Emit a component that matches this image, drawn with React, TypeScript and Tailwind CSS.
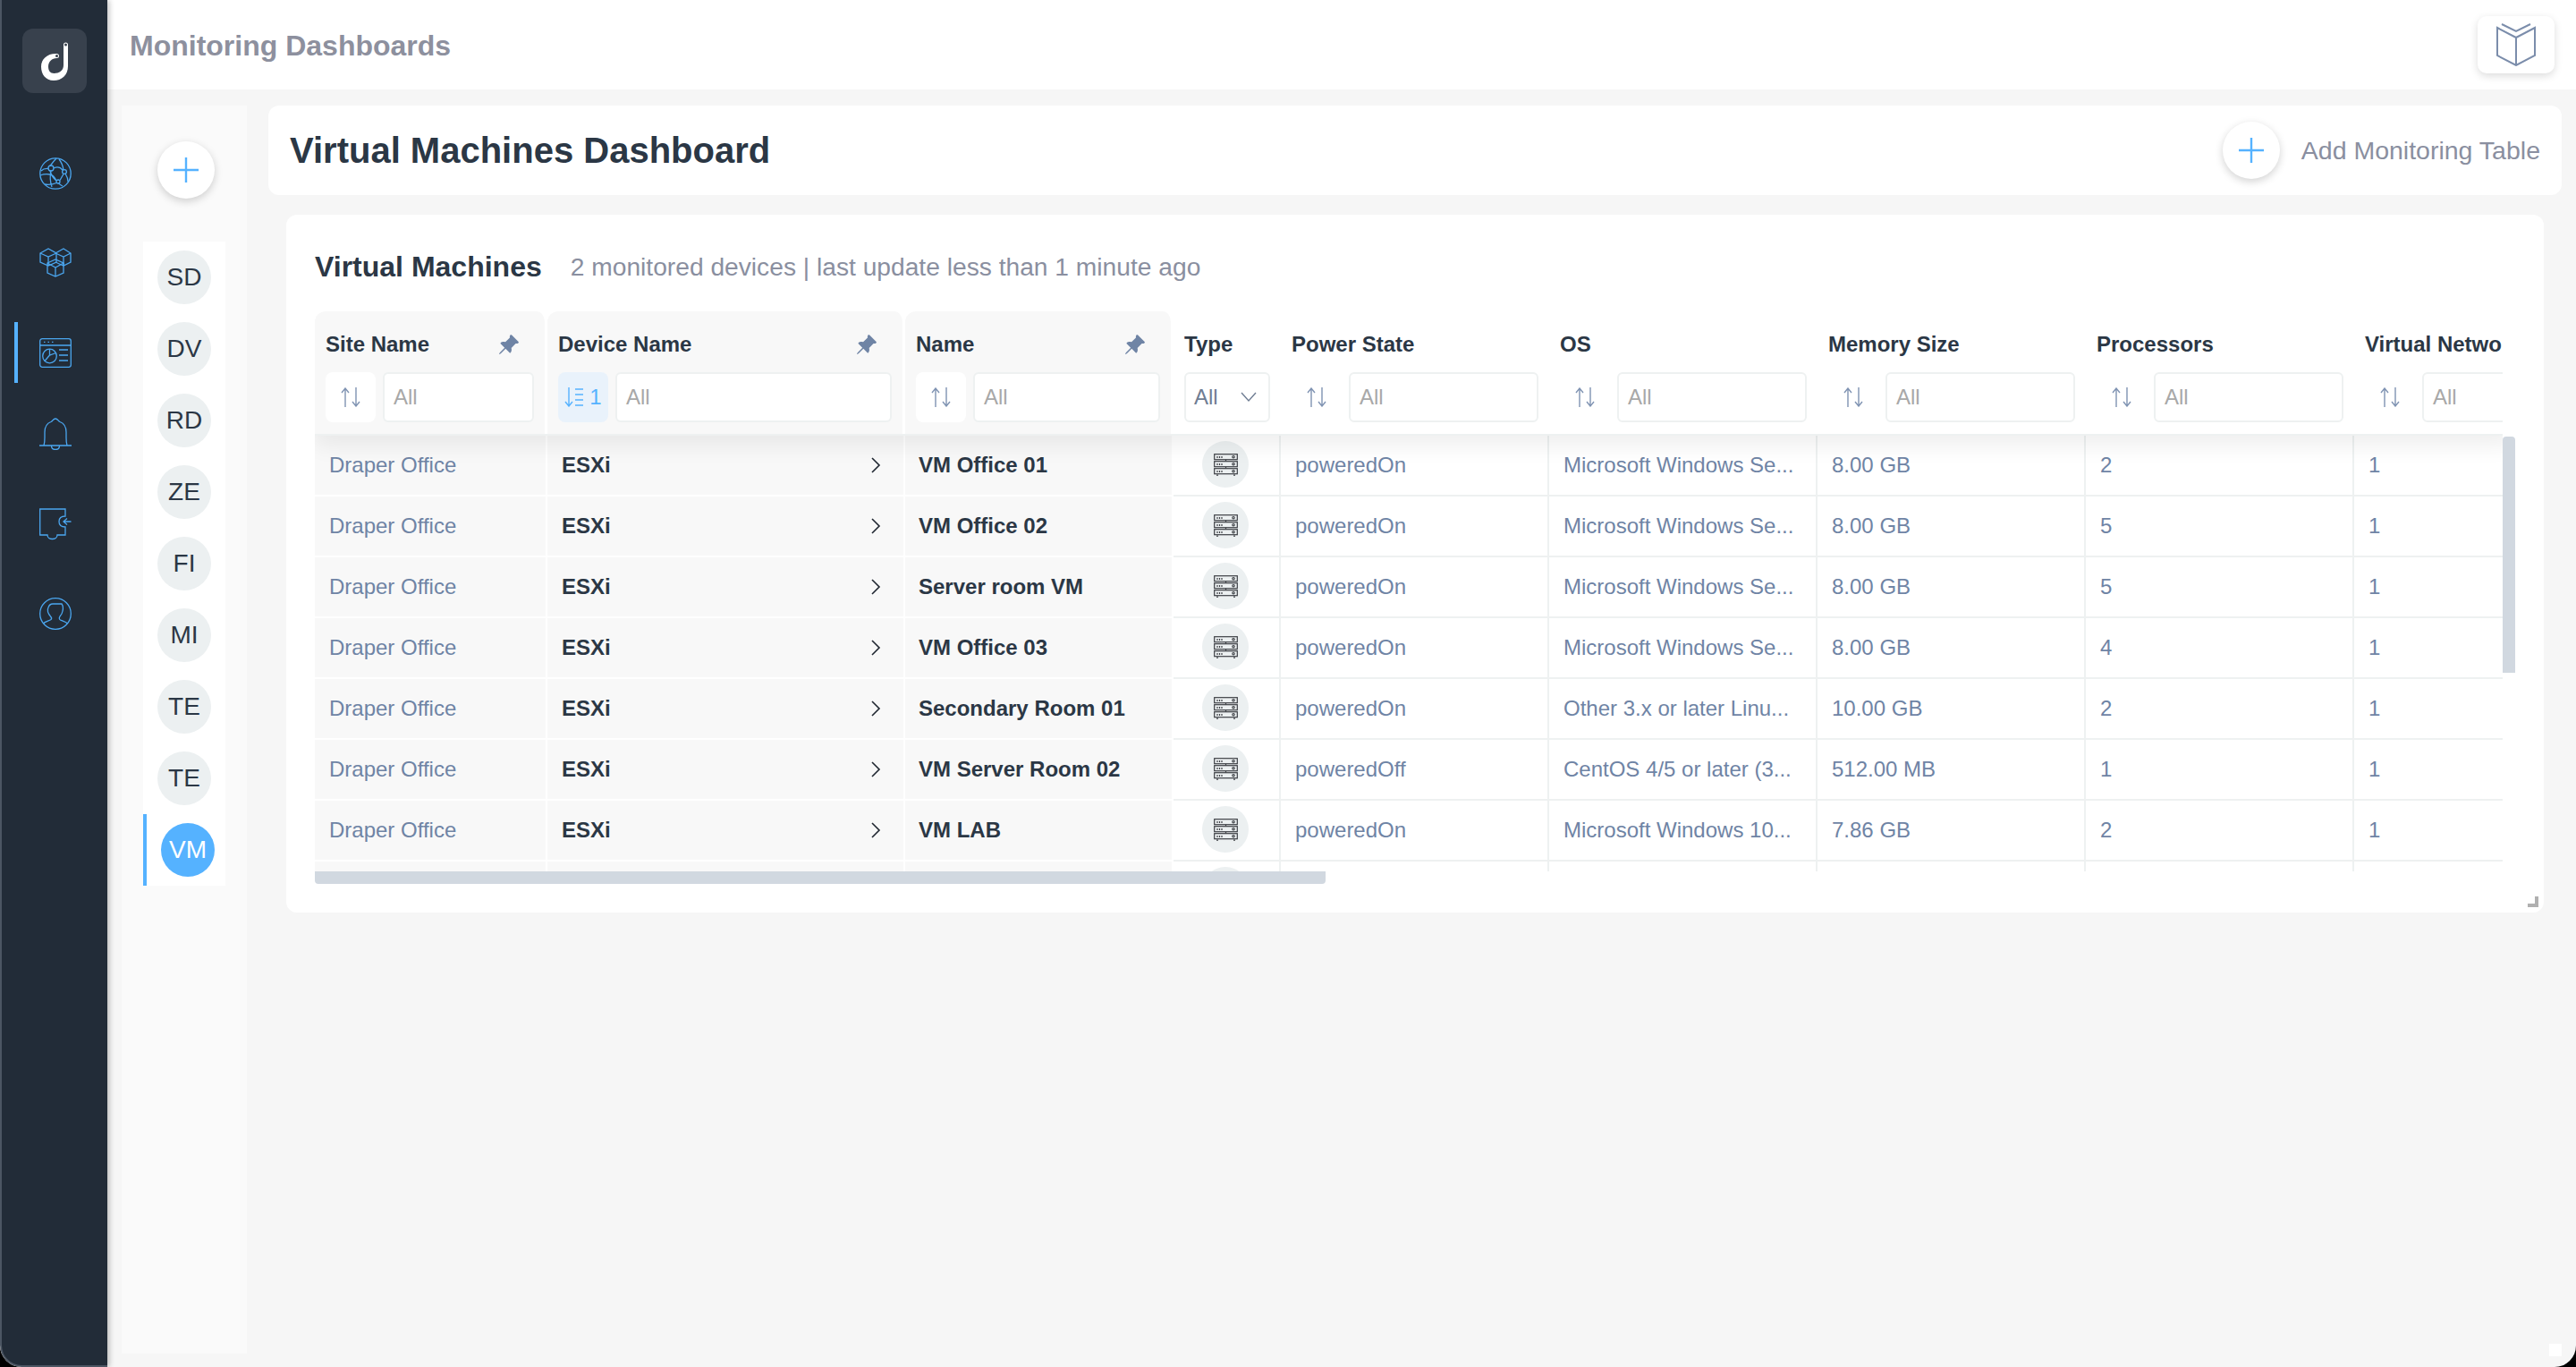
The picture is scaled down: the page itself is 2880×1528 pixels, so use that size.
import { BsPinAngleFill } from "react-icons/bs";

const iconClass = "w-[36px] h-[36px] fill-none stroke-[#4ba6ef] stroke-[1.3]";

const GlobeIcon = () => (
  <svg viewBox="0 0 36 36" className={iconClass}>
    <circle cx="18" cy="18" r="17.2" />
    <circle cx="13" cy="12" r="3" />
    <circle cx="28" cy="16" r="2.4" />
    <circle cx="21" cy="27" r="2" />
    <path d="M16 12 Q22 9 26 14 M27 18.5 L23 25.5 M19 26 Q14 22 12 15 M10 12.5 Q5 12 2 15 M1 20 Q6 18 12 19 Q16 20 19 26 M12 9.5 Q16 4 19 1 M27 14 Q26 7 22 2 M29 18 Q32 23 32 27 M21.5 29 Q24 31 26 32 M6 30 Q13 31 19 28.5 M13 15 Q11 24 14 33" />
  </svg>
);

const CubesIcon = () => (
  <svg viewBox="0 0 36 36" className={iconClass}>
    <path d="M1 8 L10 3 L19 8 L19 18 L10 22 L1 18 Z M1 8 L10 12 L19 8 M10 12 V22" />
    <path d="M18 8 L27 3 L35 8 V18 L27 22 L18 18 M18 8 L27 12 L35 8 M27 12 V22" />
    <path d="M9 19 L18 15 L27 19 V30 L18 34 L9 30 Z M9 19 L18 24 L27 19 M18 24 V34" />
  </svg>
);

const DashboardIcon = () => (
  <svg viewBox="0 0 36 33" className="w-[36px] h-[33px] fill-none stroke-[#4ba6ef] stroke-[1.3]">
    <rect x="0.7" y="0.7" width="34.6" height="31.6" rx="2.5" />
    <path d="M1 8 H35 M5 4.3 H6.5 M9.5 4.3 H11 M14 4.3 H15.5" />
    <circle cx="11.5" cy="20" r="7.8" />
    <path d="M11.5 12.2 V19 L18.5 16.5 M11.5 19 L6 25.5" />
    <path d="M22 13 H32 M22 19 H32 M22 25 H32" />
  </svg>
);

const BellIcon = () => (
  <svg viewBox="0 0 36 36" className={iconClass}>
    <path d="M0 31 H36 M5 31 Q6 28 6 22 V16 C6 10 9 6 13 4.5 C15 3.5 15.5 1 18 1 C20.5 1 21 3.5 23 4.5 C27 6 30 10 30 16 V22 Q30 28 31 31" />
    <path d="M13.5 31 C13.5 37 22.5 37 22.5 31" />
  </svg>
);

const PuzzleIcon = () => (
  <svg viewBox="0 0 36 36" className={iconClass}>
    <path d="M0.7 1 H29 V9 C24 9 22 12 22 15 C22 18 24 21 29 21 V30 H20 C20 36 9 36 9 30 H0.7 Z" />
    <path d="M35.5 15 H27 M31 11.5 L27 15 L31 18.5" />
  </svg>
);

const UserIcon = () => (
  <svg viewBox="0 0 36 36" className={iconClass}>
    <circle cx="18" cy="18" r="17.3" />
    <path d="M4.5 29 C6 27 11 26 13 24.5 C14 23.5 13.5 22 12.5 21 C10 18 8.5 14 10 11 C11 8 13 7 15 7 H25 C26.5 9 26.5 13 26 15 C25.5 18 24 20 23 21 C22 22.5 22 24 23.5 25 C25.5 26 29.5 27 31.5 29" />
  </svg>
);

const Logo = () => (
  <svg viewBox="0 0 72 72" className="w-[72px] h-[72px]">
    <path
      d="M46 18 a2.5 2.5 0 0 1 5 0 V42 C51 52 44 58 35 58 C26 58 21 51 21 42.5 C21 34 28 27.5 38.5 28 a2.5 2.5 0 0 1 0 5 C33 33 29 37 29 42.5 C29 47 31 50 35.5 50 C41 50 46 47 46 41 Z"
      fill="#ffffff"
    />
    <circle cx="48.5" cy="18" r="1.5" fill="#38414d" />
    <circle cx="38.5" cy="30.5" r="1.5" fill="#38414d" />
  </svg>
);

const PlusIcon = () => (
  <svg viewBox="0 0 28 28" className="w-[28px] h-[28px] fill-none stroke-[#55b2ff] stroke-[2.4]">
    <path d="M14 0 V28 M0 14 H28" />
  </svg>
);

const BookIcon = () => (
  <svg viewBox="0 0 44 48" className="w-[44px] h-[48px] fill-none stroke-[#7b8dab] stroke-[2]">
    <path d="M1 5 L22 16 L43 5 V36 L22 47 L1 36 Z M22 16 V47 M6 1 L22 9 L38 1" />
  </svg>
);

const SortIcon = () => (
  <svg viewBox="0 0 22 22" className="w-[22px] h-[22px] fill-none stroke-[#7f93b2] stroke-[1.4]">
    <path d="M5 22 V1 M1 6 L5 1 L9 6 M17 0 V21 M13 16 L17 21 L21 16" />
  </svg>
);

const SortActiveIcon = () => (
  <svg viewBox="0 0 22 22" className="w-[22px] h-[22px] fill-none stroke-[#55b2ff] stroke-[1.4]">
    <path d="M5 0 V21 M1 16 L5 21 L9 16 M12 2 H21 M12 8 H21 M12 14 H21 M12 20 H21" />
  </svg>
);

const ChevronRight = () => (
  <svg viewBox="0 0 12 18" className="w-[12px] h-[18px] fill-none stroke-[#1f2630] stroke-[1.6]">
    <path d="M2 1 L10 9 L2 17" />
  </svg>
);

const ChevronDown = () => (
  <svg viewBox="0 0 18 12" className="w-[18px] h-[12px] fill-none stroke-[#6f7d93] stroke-[1.4]">
    <path d="M1 1 L9 10 L17 1" />
  </svg>
);

const ServerIcon = () => (
  <svg viewBox="0 0 27 25" className="w-[27px] h-[25px] fill-none stroke-[#3c3f44] stroke-[1.2]">
    <rect x="0.7" y="0.7" width="25.6" height="6" />
    <rect x="0.7" y="8.7" width="25.6" height="6" />
    <rect x="0.7" y="16.7" width="25.6" height="6" />
    <path d="M4 3 V5 M6.5 3 V5 M9 3 V5 M4 11 V13 M6.5 11 V13 M9 11 V13 M4 19 V21 M6.5 19 V21 M9 19 V21 M13.5 7 V8.5 M13.5 15 V16.5 M3 24.2 H5 M22 24.2 H24" />
    <circle cx="22" cy="3.7" r="1.2" />
    <circle cx="22" cy="11.7" r="1.2" />
    <circle cx="22" cy="19.7" r="1.2" />
  </svg>
);

const sites = ["SD", "DV", "RD", "ZE", "FI", "MI", "TE", "TE"];

const rows = [
  { name: "VM Office 01", power: "poweredOn", os: "Microsoft Windows Se...", mem: "8.00 GB", cpu: "2", net: "1" },
  { name: "VM Office 02", power: "poweredOn", os: "Microsoft Windows Se...", mem: "8.00 GB", cpu: "5", net: "1" },
  { name: "Server room VM", power: "poweredOn", os: "Microsoft Windows Se...", mem: "8.00 GB", cpu: "5", net: "1" },
  { name: "VM Office 03", power: "poweredOn", os: "Microsoft Windows Se...", mem: "8.00 GB", cpu: "4", net: "1" },
  { name: "Secondary Room 01", power: "poweredOn", os: "Other 3.x or later Linu...", mem: "10.00 GB", cpu: "2", net: "1" },
  { name: "VM Server Room 02", power: "poweredOff", os: "CentOS 4/5 or later (3...", mem: "512.00 MB", cpu: "1", net: "1" },
  { name: "VM LAB", power: "poweredOn", os: "Microsoft Windows 10...", mem: "7.86 GB", cpu: "2", net: "1" },
  { name: "", power: "", os: "", mem: "", cpu: "", net: "" },
];

const PinnedHead = ({ label, width, active }: { label: string; width: string; active?: boolean }) => (
  <div className={`${width} shrink-0 border-r-[3px] border-white bg-[#f8f8f8] rounded-t-[12px] pb-[13px] pl-[12px] pr-[12px] pt-[23px]`}>
    <div className="flex h-[28px] items-center justify-between pr-[16px]">
      <span className="text-[24px] font-bold text-[#2b3745]">{label}</span>
      <BsPinAngleFill className="w-[25px] h-[25px] text-[#6f84a5]" />
    </div>
    <Filter active={active} />
  </div>
);

const PlainHead = ({ label }: { label: string }) => (
  <div className="w-[300px] shrink-0 pb-[13px] pl-[12px] pr-[12px] pt-[23px]">
    <div className="flex h-[28px] items-center">
      <span className="text-[24px] font-bold text-[#2b3745] whitespace-nowrap">{label}</span>
    </div>
    <Filter />
  </div>
);

const Filter = ({ active }: { active?: boolean }) => (
  <div className="mt-[17px] flex gap-[8px]">
    <div className={`flex h-[56px] w-[56px] shrink-0 items-center justify-center gap-[6px] rounded-[8px] ${active ? "bg-[#e9f2fb]" : "bg-white"}`}>
      {active ? <SortActiveIcon /> : <SortIcon />}
      {active && <span className="text-[24px] text-[#55b2ff]">1</span>}
    </div>
    <div className="flex h-[56px] min-w-0 flex-1 items-center rounded-[6px] border-[2px] border-[#eef1f1] bg-white pl-[10px]">
      <span className="text-[24px] text-[#a8a8a8]">All</span>
    </div>
  </div>
);

const BodyCell = ({ children }: { children?: React.ReactNode }) => (
  <div className="flex h-[68px] w-[300px] shrink-0 items-center border-b-[2px] border-r-[2px] border-[#eef1f1] bg-white pl-[16px] text-[24px] text-[#6f84a5] whitespace-nowrap">
    {children}
  </div>
);

const App = () => {
  return (
    <div className="h-[1528px] w-[2880px] overflow-hidden bg-black font-['Liberation_Sans',sans-serif]">
      <div className="relative flex h-full w-full overflow-hidden rounded-b-[24px] bg-[#f6f6f6]">
        <aside className="relative z-20 flex h-full w-[120px] shrink-0 flex-col items-center rounded-bl-[24px] border-b-[2px] border-l-[2px] border-[#4c5663] bg-[#222c38] shadow-[2px_0_6px_rgba(0,0,0,0.25)]">
          <div className="mt-[32px] h-[72px] w-[72px] rounded-[12px] bg-[#38414d]">
            <Logo />
          </div>
          <div className="mt-[72px] flex flex-col items-center pl-[2px]">
            <GlobeIcon />
            <div className="mt-[63px]">
              <CubesIcon />
            </div>
            <div className="relative mt-[65px] flex h-[36px] items-center">
              <div className="absolute left-[-28px] top-[-16px] h-[68px] w-[4px] bg-[#55b2ff]" />
              <DashboardIcon />
            </div>
            <div className="mt-[55px]">
              <BellIcon />
            </div>
            <div className="mt-[65px]">
              <PuzzleIcon />
            </div>
            <div className="mt-[64px]">
              <UserIcon />
            </div>
          </div>
        </aside>

        <main className="flex min-w-0 flex-1 flex-col">
          <header className="flex h-[100px] shrink-0 items-center justify-between bg-white pl-[25px] pr-[24px]">
            <h1 className="pt-[1px] text-[32px] font-bold text-[#8d909e]">Monitoring Dashboards</h1>
            <button className="flex h-[64px] w-[86px] items-center justify-center rounded-[10px] bg-white shadow-[0_3px_10px_rgba(0,0,0,0.14)]">
              <BookIcon />
            </button>
          </header>

          <div className="flex min-h-0 flex-1 pr-[16px] pt-[18px]">
            <div className="ml-[16px] mb-[15px] flex w-[140px] shrink-0 flex-col items-center bg-[#fafafa]">
              <button className="ml-[4px] mt-[40px] flex h-[64px] w-[64px] items-center justify-center rounded-full bg-white shadow-[0_3px_10px_rgba(0,0,0,0.18)]">
                <PlusIcon />
              </button>
              <div className="mt-[48px] w-[92px] bg-white">
                {sites.map((s, i) => (
                  <div key={i} className="flex h-[80px] items-center pl-[16px]">
                    <div className="flex h-[60px] w-[60px] items-center justify-center rounded-full bg-[#ecf0f1] text-[28px] text-[#2b3745]">
                      {s}
                    </div>
                  </div>
                ))}
                <div className="flex h-[80px] items-center border-l-[4px] border-[#55b2ff] pl-[16px]">
                  <div className="flex h-[60px] w-[60px] items-center justify-center rounded-full bg-[#55b2ff] text-[28px] text-white">
                    VM
                  </div>
                </div>
              </div>
            </div>

            <div className="ml-[24px] flex min-w-0 flex-1 flex-col">
              <div className="flex h-[100px] items-center justify-between rounded-[12px] bg-white pl-[24px] pr-[24px]">
                <h2 className="text-[40px] font-bold text-[#2b3745]">Virtual Machines Dashboard</h2>
                <div className="flex items-center gap-[24px]">
                  <button className="flex h-[64px] w-[64px] items-center justify-center rounded-full bg-white shadow-[0_3px_10px_rgba(0,0,0,0.18)]">
                    <PlusIcon />
                  </button>
                  <span className="text-[28.5px] text-[#8a8fa0]">Add Monitoring Table</span>
                </div>
              </div>

              <section className="relative ml-[20px] mr-[20px] mt-[22px] h-[780px] rounded-[12px] bg-white pl-[32px] pt-[40px]">
                <div className="flex h-[36px] items-center gap-[32px]">
                  <h3 className="text-[32px] font-bold text-[#2b3745]">Virtual Machines</h3>
                  <span className="text-[28.2px] text-[#8a8fa0]">2 monitored devices | last update less than 1 minute ago</span>
                </div>

                <div className="mt-[32px] flex">
                  <div className="h-[626px] w-[2446px] overflow-hidden">
                    <div className="relative z-10 flex w-[2460px] border-b-[2px] border-[#eef1f1] bg-white shadow-[0_10px_24px_rgba(0,0,0,0.07)]">
                      <PinnedHead label="Site Name" width="w-[260px]" />
                      <PinnedHead label="Device Name" width="w-[400px]" active />
                      <PinnedHead label="Name" width="w-[300px]" />
                      <div className="w-[120px] shrink-0 pl-[12px] pr-[12px] pt-[23px]">
                        <div className="flex h-[28px] items-center">
                          <span className="text-[24px] font-bold text-[#2b3745]">Type</span>
                        </div>
                        <div className="mt-[17px] flex h-[56px] w-[96px] items-center justify-between rounded-[6px] border-[2px] border-[#eef1f1] pl-[9px] pr-[13px]">
                          <span className="text-[24px] text-[#6f7d93]">All</span>
                          <ChevronDown />
                        </div>
                      </div>
                      <PlainHead label="Power State" />
                      <PlainHead label="OS" />
                      <PlainHead label="Memory Size" />
                      <PlainHead label="Processors" />
                      <PlainHead label="Virtual Network" />
                    </div>

                    {rows.map((r, i) => (
                      <div key={i} className="flex w-[2460px]">
                        <div className="flex h-[68px] w-[260px] shrink-0 items-center border-b-[2px] border-r-[2px] border-white bg-[#f8f8f8] pl-[16px] text-[24px] text-[#6f84a5]">
                          {r.name && "Draper Office"}
                        </div>
                        <div className="flex h-[68px] w-[400px] shrink-0 items-center justify-between border-b-[2px] border-r-[2px] border-white bg-[#f8f8f8] pl-[16px] pr-[25px] text-[24px] font-bold text-[#2b3745]">
                          {r.name && "ESXi"}
                          {r.name && <ChevronRight />}
                        </div>
                        <div className="flex h-[68px] w-[300px] shrink-0 items-center border-b-[2px] border-r-[2px] border-white bg-[#f8f8f8] pl-[15px] text-[24px] font-bold text-[#2b3745]">
                          {r.name}
                        </div>
                        <div className="flex h-[68px] w-[120px] shrink-0 items-center justify-center border-b-[2px] border-r-[2px] border-[#eef1f1] bg-white pb-[2px] pr-[2px]">
                          <div className="flex h-[52px] w-[52px] items-center justify-center rounded-full bg-[#ecf0f1]">
                            <ServerIcon />
                          </div>
                        </div>
                        <BodyCell>{r.power}</BodyCell>
                        <BodyCell>{r.os}</BodyCell>
                        <BodyCell>{r.mem}</BodyCell>
                        <BodyCell>{r.cpu}</BodyCell>
                        <BodyCell>{r.net}</BodyCell>
                      </div>
                    ))}
                  </div>
                  <div className="mt-[140px] h-[264px] w-[14px] rounded-t-[4px] bg-[#d1d8e0]" />
                </div>
                <div className="h-[14px] w-[1130px] rounded-b-[4px] bg-[#d1d8e0]" />

                <div className="absolute bottom-[6px] right-[6px] h-[12px] w-[12px] border-b-[4px] border-r-[4px] border-[#b0b0b0]" />
              </section>
            </div>
          </div>
        </main>

        <div className="absolute bottom-[12px] right-[16px] h-[14px] w-[14px] bg-white" />
      </div>
    </div>
  );
};

export default App;
